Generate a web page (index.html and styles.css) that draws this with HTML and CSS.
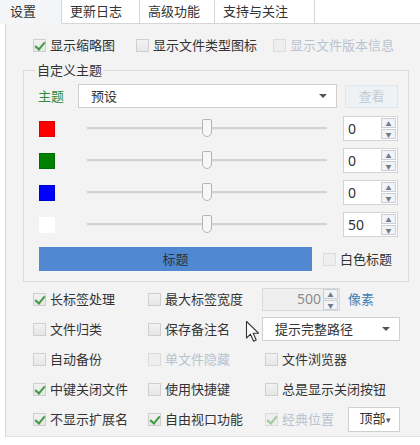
FILE: index.html
```html
<!DOCTYPE html>
<html lang="zh-CN">
<head>
    <meta charset="UTF-8">
    <title>设置</title>
    <link rel="stylesheet" href="styles.css">
</head>
<body>
    <div class="tabs">
        <div class="tab active t1">设置</div>
        <div class="tab t2">更新日志</div>
        <div class="tab t3">高级功能</div>
        <div class="tab t4">支持与关注</div>
        <div class="tab-fill"></div>
    </div>

    <div class="panel">
        <div class="top-row">
            <label class="opt w1"><span class="cb on"></span>显示缩略图</label>
            <label class="opt w2"><span class="cb"></span>显示文件类型图标</label>
            <label class="opt off"><span class="cb"></span>显示文件版本信息</label>
        </div>

        <div class="group">
            <div class="legend">自定义主题</div>

            <div class="theme-row">
                <span class="theme-label">主题</span>
                <div class="select theme-select">预设<span class="caret"></span></div>
                <button class="btn-off">查看</button>
            </div>

            <div class="color-row">
                <span class="swatch red"></span>
                <div class="slider"><span class="thumb"></span></div>
                <div class="spin"><span class="val">0</span><span class="arrows"><i>▲</i><i>▼</i></span></div>
            </div>
            <div class="color-row">
                <span class="swatch green"></span>
                <div class="slider"><span class="thumb"></span></div>
                <div class="spin"><span class="val">0</span><span class="arrows"><i>▲</i><i>▼</i></span></div>
            </div>
            <div class="color-row">
                <span class="swatch blue"></span>
                <div class="slider"><span class="thumb"></span></div>
                <div class="spin"><span class="val">0</span><span class="arrows"><i>▲</i><i>▼</i></span></div>
            </div>
            <div class="color-row">
                <span class="swatch white"></span>
                <div class="slider"><span class="thumb"></span></div>
                <div class="spin"><span class="val">50</span><span class="arrows"><i>▲</i><i>▼</i></span></div>
            </div>

            <div class="title-row">
                <div class="title-bar">标题</div>
                <label class="opt"><span class="cb dim"></span>白色标题</label>
            </div>
        </div>

        <div class="options">
            <label class="opt"><span class="cb on"></span>长标签处理</label>
            <label class="opt"><span class="cb"></span>最大标签宽度</label>
            <div class="cell">
                <div class="spin spin-off"><span class="val">500</span><span class="arrows"><i>▲</i><i>▼</i></span></div>
                <span class="unit">像素</span>
            </div>

            <label class="opt"><span class="cb"></span>文件归类</label>
            <label class="opt"><span class="cb"></span>保存备注名</label>
            <div class="cell">
                <div class="select path-select">提示完整路径<span class="caret"></span></div>
            </div>

            <label class="opt"><span class="cb"></span>自动备份</label>
            <label class="opt off"><span class="cb"></span>单文件隐藏</label>
            <label class="opt c3"><span class="cb"></span>文件浏览器</label>

            <label class="opt"><span class="cb on"></span>中键关闭文件</label>
            <label class="opt"><span class="cb"></span>使用快捷键</label>
            <label class="opt c3"><span class="cb"></span>总是显示关闭按钮</label>

            <label class="opt"><span class="cb on"></span>不显示扩展名</label>
            <label class="opt"><span class="cb on"></span>自由视口功能</label>
            <div class="cell">
                <label class="opt off c3 w3"><span class="cb on"></span>经典位置</label>
                <button class="btn-pos">顶部<span class="small-caret">▾</span></button>
            </div>
        </div>

        <svg class="pointer" width="16" height="24" viewBox="0 0 16 24">
            <path d="M1.5 1.5 L1.5 18 L5.5 14.2 L8.6 21.2 L11.2 20 L8.2 13.2 L13.5 13.2 Z" fill="#fff" stroke="#333" stroke-width="1.1" stroke-linejoin="round"/>
        </svg>
    </div>
</body>
</html>
```

FILE: styles.css
```css
body {
    margin: 0;
    width: 420px;
    height: 445px;
    background: #ffffff;
    font-family: "Noto Sans CJK SC", "Microsoft YaHei", sans-serif;
    font-size: 13px;
    line-height: 18px;
    color: #333333;
    overflow: hidden;
}

/* tabs */
.tabs {
    display: flex;
    height: 24px;
}

.tab {
    box-sizing: border-box;
    height: 24px;
    line-height: 22px;
    padding-left: 8px;
    background: #ffffff;
    border-right: 1px solid #d6d6d6;
    border-bottom: 1px solid #d6d6d6;
}

.tab.active {
    padding-left: 10px;
    background: #f3f5f7;
    border-bottom-color: #f3f5f7;
}

.t1 { width: 62px; }
.t2 { width: 78px; }
.t3 { width: 75px; }
.t4 { width: 100px; }

.tab-fill {
    flex: 1;
    border-bottom: 1px solid #d6d6d6;
}

/* main panel */
.panel {
    position: relative;
    box-sizing: border-box;
    height: 413px;
    margin-left: 5px;
    padding: 12px 0 0 17px;
    background: #f3f3f3;
    border-left: 1px solid #d8d8d8;
    border-bottom: 1px solid #e2e2e2;
}

.top-row {
    display: flex;
    height: 18px;
    padding-left: 10px;
}

.opt {
    display: flex;
    align-items: center;
    height: 18px;
    white-space: nowrap;
}

.w1 { width: 103px; }
.w2 { width: 137px; }
.w3 { width: 85px; }

.opt.off {
    color: #b9c3cf;
}

/* checkbox */
.cb {
    position: relative;
    box-sizing: border-box;
    width: 13px;
    height: 13px;
    margin-right: 4px;
    flex: none;
    background: linear-gradient(#f2f2f2, #e6e6e6);
    border: 1px solid #cfcfcf;
}

.opt.off .cb, .cb.dim {
    background: #eeeeee;
    border-color: #dcdcdc;
}

.cb.on::after {
    content: "";
    position: absolute;
    left: 3px;
    top: 0;
    width: 4px;
    height: 8px;
    border: solid #3f9b3f;
    border-width: 0 2px 2px 0;
    transform: rotate(40deg);
}

.opt.off .cb.on::after {
    border-color: #9ccb9c;
}

/* group box */
.group {
    box-sizing: border-box;
    width: 386px;
    margin-top: 16px;
    padding: 0 0 10px 14px;
    border: 1px solid #dadada;
}

.legend {
    width: max-content;
    margin: -10px 0 0 -3px;
    padding: 0 2px;
    background: #f3f3f3;
    line-height: 18px;
}

.theme-row {
    display: flex;
    align-items: center;
    height: 24px;
    margin-top: 5px;
}

.theme-label {
    width: 40px;
    color: #2e8b3c;
}

.select {
    position: relative;
    box-sizing: border-box;
    height: 24px;
    line-height: 22px;
    padding-left: 12px;
    background: #ffffff;
    border: 1px solid #cfcfcf;
}

.theme-select {
    width: 259px;
}

.caret {
    position: absolute;
    right: 9px;
    top: 9px;
    border-left: 4px solid transparent;
    border-right: 4px solid transparent;
    border-top: 4px solid #555555;
}

.btn-off {
    box-sizing: border-box;
    width: 53px;
    height: 23px;
    margin-left: 8px;
    padding: 0;
    font: inherit;
    color: #c3ccd6;
    background: #eef2f5;
    border: 1px solid #e1e6ea;
}

/* colour rows */
.color-row {
    display: flex;
    align-items: center;
    height: 25px;
    margin-top: 7px;
}

.theme-row + .color-row {
    margin-top: 8px;
}

.swatch {
    box-sizing: border-box;
    width: 16px;
    height: 16px;
    margin-left: 1px;
}

.red { background: #ff0000; border: 1px solid #d80000; }
.green { background: #008000; border: 1px solid #006d00; }
.blue { background: #0000ff; border: 1px solid #0000cc; }
.white { background: #ffffff; }

.slider {
    position: relative;
    width: 240px;
    height: 2px;
    margin-left: 32px;
    background: #d2d2d2;
    border-bottom: 1px solid #ececec;
}

.thumb {
    position: absolute;
    left: 115px;
    top: -8px;
    box-sizing: border-box;
    width: 10px;
    height: 18px;
    background: #f7f7f7;
    border: 1px solid #b4b4b4;
    border-radius: 2px 2px 5px 5px;
}

/* spin box */
.spin {
    display: flex;
    align-items: center;
    box-sizing: border-box;
    width: 55px;
    height: 25px;
    margin-left: 16px;
    padding: 0 1px 0 4px;
    background: #ffffff;
    border: 1px solid #d3d3d3;
}

.spin .val {
    flex: 1;
    font-family: "Noto Sans", "Liberation Sans", sans-serif;
    font-size: 14px;
}

.arrows {
    display: flex;
    flex-direction: column;
    gap: 1px;
}

.arrows i {
    box-sizing: border-box;
    width: 15px;
    height: 10px;
    font-style: normal;
    font-size: 6px;
    line-height: 9px;
    text-align: center;
    color: #6f7a8a;
    background: #f1f3f7;
    border: 1px solid #c9ced6;
}

.spin-off {
    width: 78px;
    height: 23px;
    margin-left: 0;
    background: #efefef;
    border-color: #d9d9d9;
}

.spin-off .val {
    text-align: right;
    padding-right: 2px;
    color: #8d8d8d;
}

/* title bar */
.title-row {
    display: flex;
    align-items: center;
    height: 24px;
    margin-top: 10px;
}

.title-bar {
    width: 273px;
    height: 24px;
    margin-left: 1px;
    margin-right: 11px;
    line-height: 24px;
    text-align: center;
    background: #5089d1;
    color: #2a3340;
}

/* lower options */
.options {
    display: grid;
    grid-template-columns: 115px 114px 138px;
    grid-auto-rows: 30px;
    align-items: center;
    margin-top: 2px;
    padding-left: 10px;
}

.cell {
    display: flex;
    align-items: center;
}

.c3 {
    margin-left: 3px;
}

.unit {
    margin-left: 8px;
    color: #3f7fb5;
}

.path-select {
    width: 143px;
}

.btn-pos {
    box-sizing: border-box;
    width: 53px;
    height: 25px;
    margin-left: 0;
    padding: 0 0 0 2px;
    font: inherit;
    color: #333333;
    background: #ffffff;
    border: 1px solid #d0d0d0;
}

.small-caret {
    font-size: 9px;
    color: #555555;
}

.pointer {
    position: absolute;
    left: 239px;
    top: 296px;
}
```
